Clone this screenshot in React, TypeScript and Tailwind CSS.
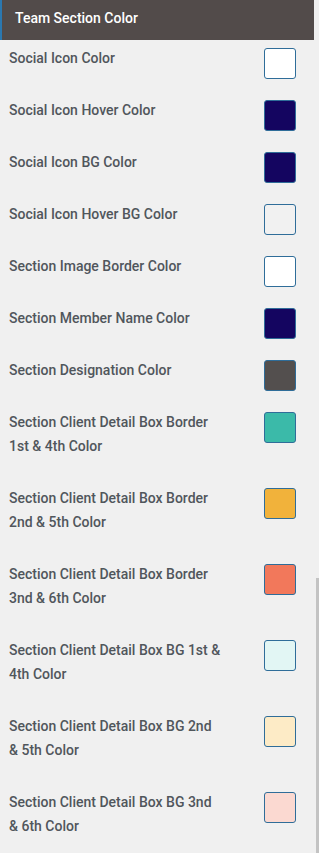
import React from 'react';

interface ColorOption {
  label: string;
  color: string;
}

const options: ColorOption[] = [
  { label: 'Social Icon Color', color: '#ffffff' },
  { label: 'Social Icon Hover Color', color: '#140560' },
  { label: 'Social Icon BG Color', color: '#140560' },
  { label: 'Social Icon Hover BG Color', color: '#f1f1f1' },
  { label: 'Section Image Border Color', color: '#ffffff' },
  { label: 'Section Member Name Color', color: '#140560' },
  { label: 'Section Designation Color', color: '#534f4e' },
  { label: 'Section Client Detail Box Border 1st & 4th Color', color: '#3bbaa9' },
  { label: 'Section Client Detail Box Border 2nd & 5th Color', color: '#f1b23b' },
  { label: 'Section Client Detail Box Border 3nd & 6th Color', color: '#f2785b' },
  { label: 'Section Client Detail Box BG 1st & 4th Color', color: '#e2f6f4' },
  { label: 'Section Client Detail Box BG 2nd & 5th Color', color: '#fdebc6' },
  { label: 'Section Client Detail Box BG 3nd & 6th Color', color: '#fbd9d1' },
];

const Swatch: React.FC<{ color: string }> = ({ color }) => (
  <span
    className="mt-[2px] block h-[31px] w-[32px] shrink-0 rounded-[3px] border border-[#2f6d99]"
    style={{ backgroundColor: color }}
  />
);

export default function App() {
  return (
    <div
      className="relative h-[853px] w-[319px] overflow-hidden bg-[#f0f0f0]"
      style={{ fontFamily: 'Roboto, "Liberation Sans", sans-serif' }}
    >
      {/* Section header */}
      <div className="flex h-[40px] w-[314px] items-center border-l-2 border-[#2b78b0] bg-[#524b4a] pl-[13px] pb-[3px]">
        <span className="text-[14px] font-medium text-white">Team Section Color</span>
      </div>

      {/* Colour options */}
      <div className="flex flex-col pt-[6px] pl-[9px]">
        {options.map((opt) => (
          <div key={opt.label} className="flex items-start">
            <span className="w-[212px] pb-[28px] text-[14px] font-medium leading-[24px] text-[#50565c]">
              {opt.label}
            </span>
            <span className="ml-[43px]">
              <Swatch color={opt.color} />
            </span>
          </div>
        ))}
      </div>

      {/* Scrollbar thumb */}
      <div className="absolute right-0 top-[578px] h-[275px] w-[3px] bg-[#c3c3c3]" />
    </div>
  );
}
